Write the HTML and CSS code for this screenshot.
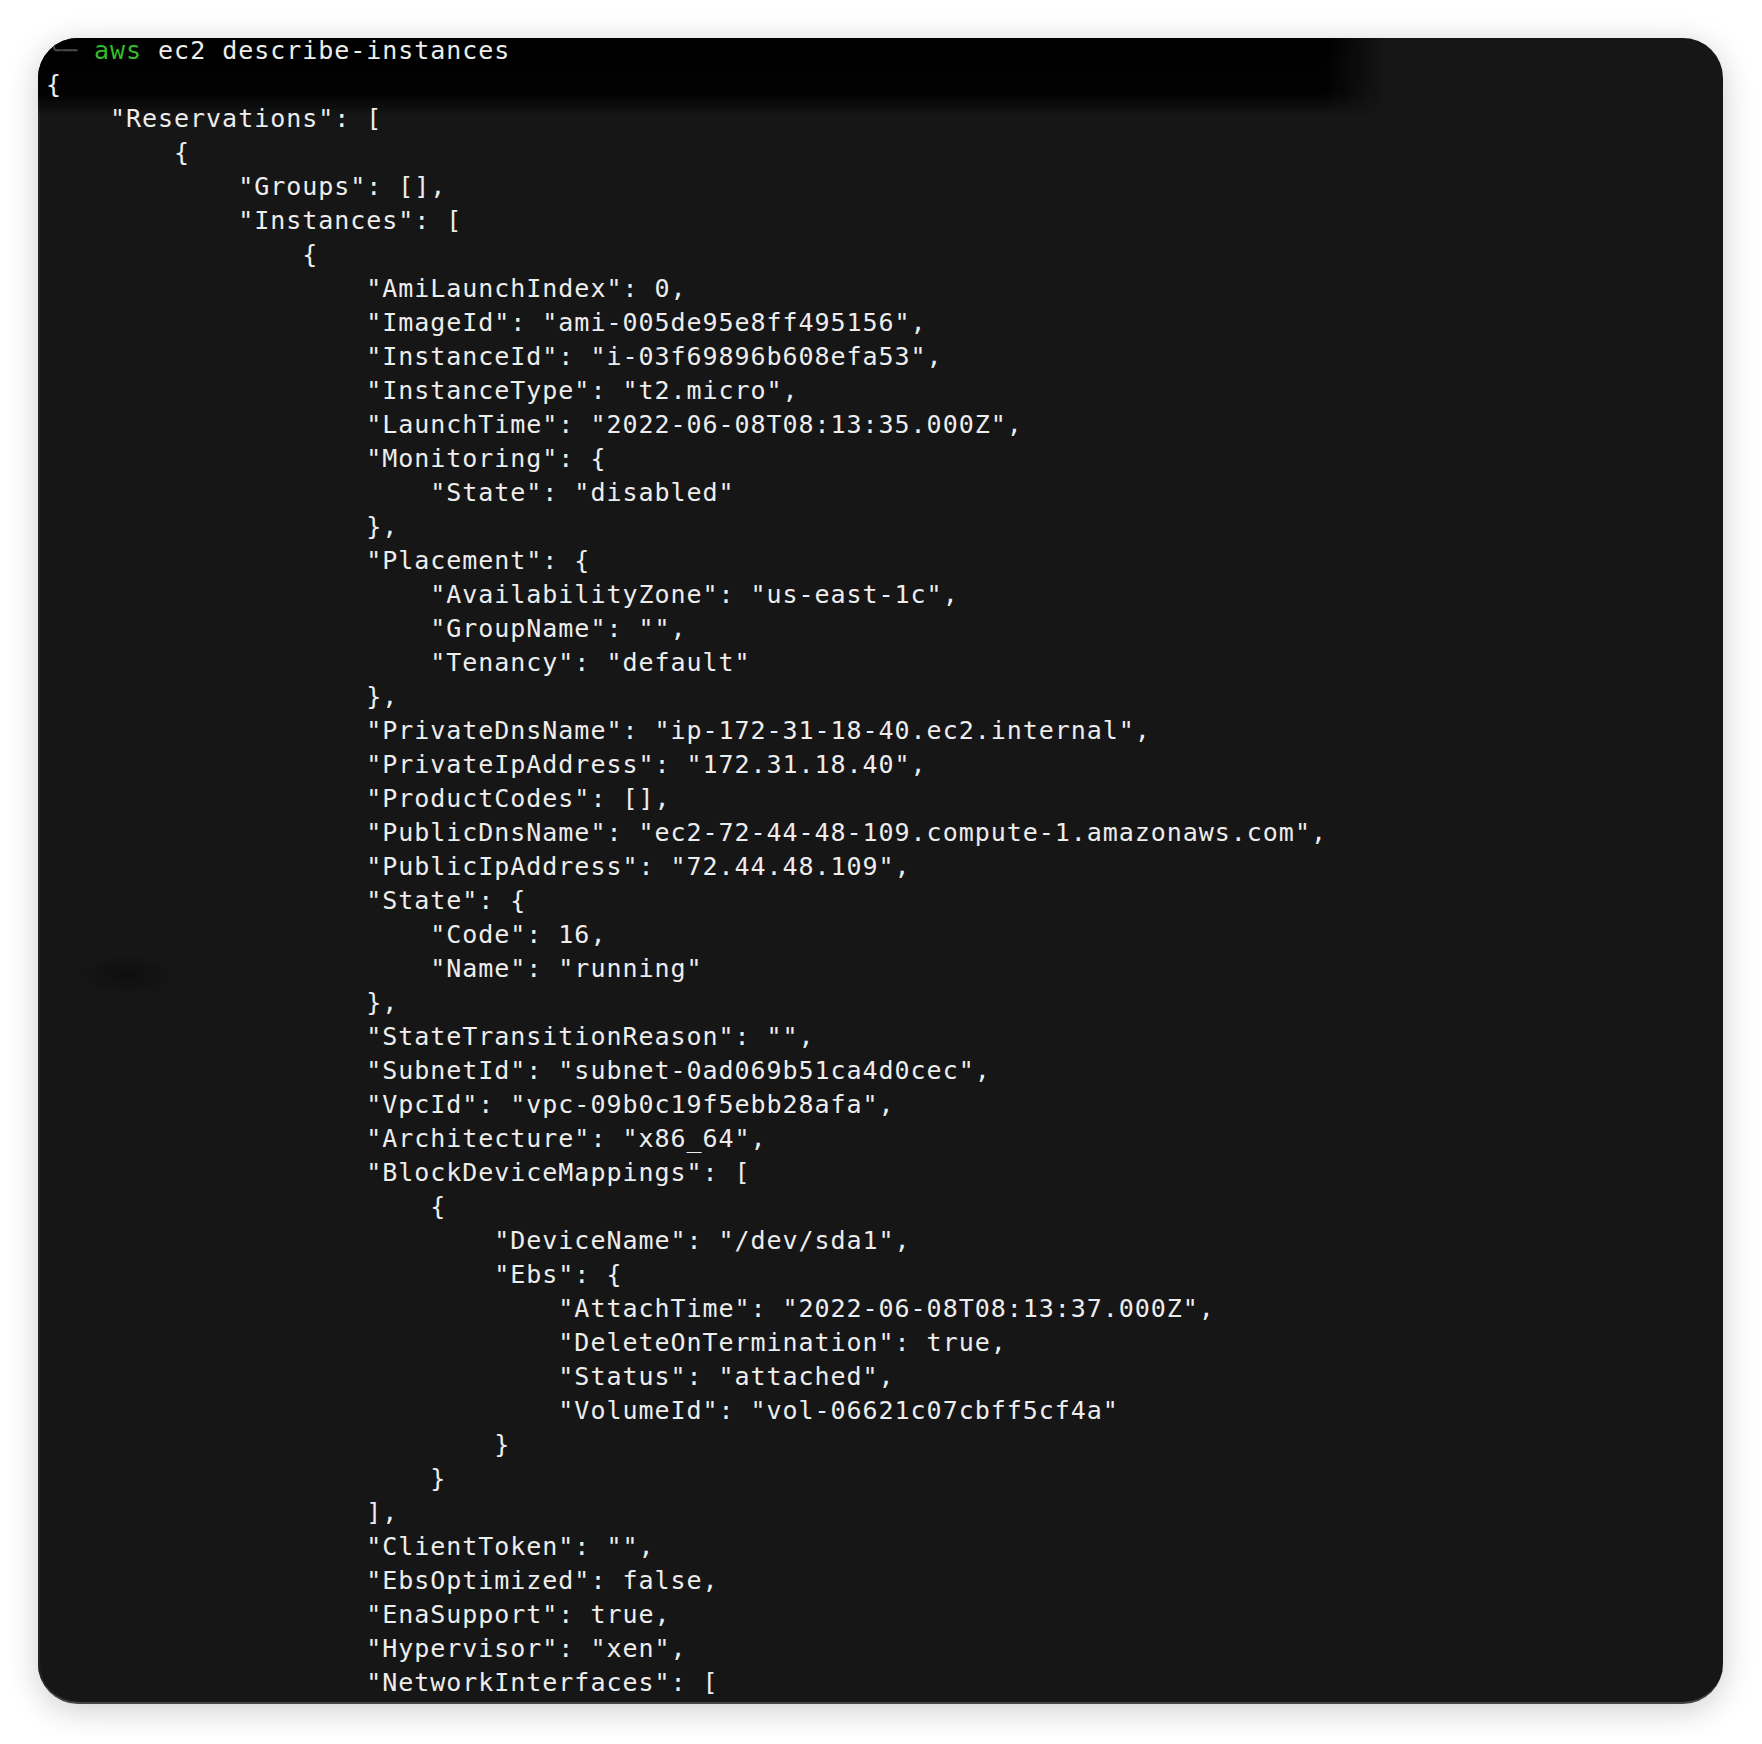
FILE: index.html
```html
<!DOCTYPE html>
<html lang="en">
<head>
    <meta charset="UTF-8">
    <meta name="viewport" content="width=device-width, initial-scale=1.0">
    <title>aws ec2 describe-instances</title>
    <link rel="stylesheet" href="styles.css">
</head>
<body>
    <div class="terminal">
<pre class="output"><span class="prompt">╰─ </span><span class="cmd">aws</span> ec2 describe-instances
{
    "Reservations": [
        {
            "Groups": [],
            "Instances": [
                {
                    "AmiLaunchIndex": 0,
                    "ImageId": "ami-005de95e8ff495156",
                    "InstanceId": "i-03f69896b608efa53",
                    "InstanceType": "t2.micro",
                    "LaunchTime": "2022-06-08T08:13:35.000Z",
                    "Monitoring": {
                        "State": "disabled"
                    },
                    "Placement": {
                        "AvailabilityZone": "us-east-1c",
                        "GroupName": "",
                        "Tenancy": "default"
                    },
                    "PrivateDnsName": "ip-172-31-18-40.ec2.internal",
                    "PrivateIpAddress": "172.31.18.40",
                    "ProductCodes": [],
                    "PublicDnsName": "ec2-72-44-48-109.compute-1.amazonaws.com",
                    "PublicIpAddress": "72.44.48.109",
                    "State": {
                        "Code": 16,
                        "Name": "running"
                    },
                    "StateTransitionReason": "",
                    "SubnetId": "subnet-0ad069b51ca4d0cec",
                    "VpcId": "vpc-09b0c19f5ebb28afa",
                    "Architecture": "x86_64",
                    "BlockDeviceMappings": [
                        {
                            "DeviceName": "/dev/sda1",
                            "Ebs": {
                                "AttachTime": "2022-06-08T08:13:37.000Z",
                                "DeleteOnTermination": true,
                                "Status": "attached",
                                "VolumeId": "vol-06621c07cbff5cf4a"
                            }
                        }
                    ],
                    "ClientToken": "",
                    "EbsOptimized": false,
                    "EnaSupport": true,
                    "Hypervisor": "xen",
                    "NetworkInterfaces": [
</pre>
    </div>
    <div class="watermark">安全客（www.anquanke.com）</div>
</body>
</html>
```

FILE: styles.css
```css
body {
    margin: 0;
    padding: 0;
    background-color: #ffffff;
    font-family: "Liberation Sans", "Noto Sans CJK SC", sans-serif;
    overflow: hidden;
}

/* terminal window */
.terminal {
    position: relative;
    box-sizing: border-box;
    width: 1685px;
    height: 1666px;
    margin: 38px 0 0 38px;
    padding-left: 8px;
    overflow: hidden;
    border-radius: 40px;
    border-bottom: 2px solid #454545;
    background-color: #161616;
    background-image: radial-gradient(ellipse 55px 22px at 89px 937px, rgba(0,0,0,0.35), transparent);
    box-shadow: 0 6px 32px rgba(0,0,0,0.2), inset 2px 0 0 #222;
}

/* blurred dark window behind, top left */
.terminal::before {
    content: "";
    position: absolute;
    left: 0;
    top: 0;
    width: 1347px;
    height: 80px;
    background: linear-gradient(to bottom, #000 0, #020202 55px, rgba(0,0,0,0) 78px);
    -webkit-mask-image: linear-gradient(to right, #000 1287px, transparent 1347px);
    mask-image: linear-gradient(to right, #000 1287px, transparent 1347px);
}

.output {
    position: relative;
    margin: -4px 0 0 0;
    font-family: "DejaVu Sans Mono", monospace;
    font-size: 25px;
    line-height: 34px;
    letter-spacing: 0.96px;
    color: #ededed;
    white-space: pre;
}

.prompt {
    color: #4a4a4a;
}

.cmd {
    color: #33bb28;
}

.watermark {
    margin: 12px 0 0 1547px;
    font-size: 15px;
    line-height: 20px;
    color: #ffffff;
    white-space: nowrap;
}
```
